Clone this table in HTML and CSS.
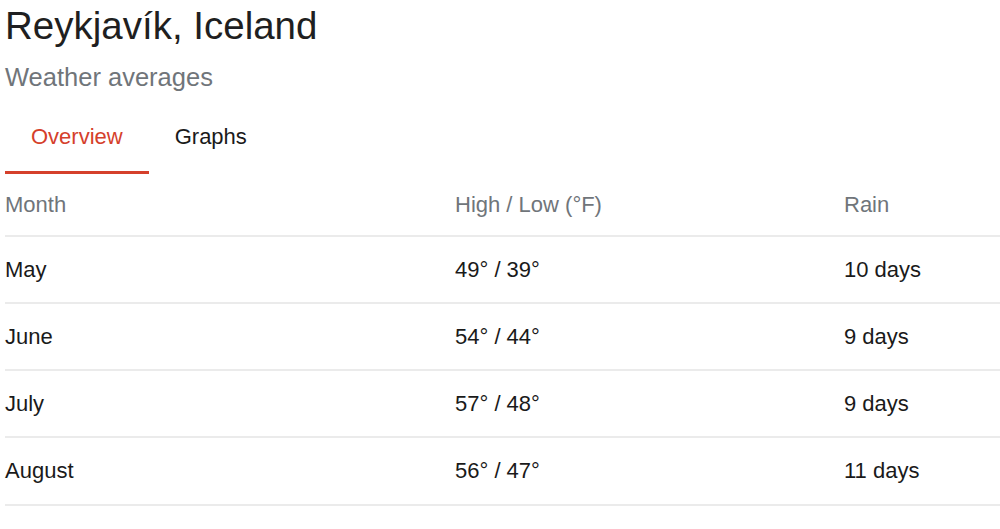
FILE: index.html
```html
<!DOCTYPE html>
<html lang="en">
<head>
<meta charset="utf-8">
<title>Reykjavík, Iceland – Weather averages</title>
<link rel="stylesheet" href="styles.css">
</head>
<body>
<main class="card">
  <h1 class="title">Reykjavík, Iceland</h1>
  <div class="subtitle">Weather averages</div>
  <nav class="tabs">
    <div class="tab active">Overview</div>
    <div class="tab">Graphs</div>
  </nav>
  <div class="table">
    <div class="row head">
      <div>Month</div>
      <div>High / Low (°F)</div>
      <div>Rain</div>
    </div>
    <div class="row">
      <div>May</div>
      <div>49° / 39°</div>
      <div>10 days</div>
    </div>
    <div class="row">
      <div>June</div>
      <div>54° / 44°</div>
      <div>9 days</div>
    </div>
    <div class="row">
      <div>July</div>
      <div>57° / 48°</div>
      <div>9 days</div>
    </div>
    <div class="row last">
      <div>August</div>
      <div>56° / 47°</div>
      <div>11 days</div>
    </div>
  </div>
</main>
</body>
</html>
```
FILE: styles.css
```css
html, body {
  margin: 0;
  padding: 0;
  background: #ffffff;
}

body {
  font-family: "Liberation Sans", Arial, Helvetica, sans-serif;
  color: #202124;
}

.card {
  padding-left: 5px;
}

.title {
  margin: 4px 0 0 0;
  font-size: 38.5px;
  line-height: 44px;
  font-weight: normal;
  color: #1f1f21;
}

.subtitle {
  margin-top: 13px;
  font-size: 25.5px;
  line-height: 32px;
  color: #70757a;
}

.tabs {
  display: flex;
}

.tab {
  padding: 31px 26px 21px 26px;
  font-size: 22px;
  line-height: 26px;
  color: #1a1a1a;
  border-bottom: 3px solid transparent;
}

.tab.active {
  color: #d5402b;
  border-bottom-color: #d5402b;
}

.table {
  display: flex;
  flex-direction: column;
}

.row {
  display: grid;
  grid-template-columns: 450px 389px 1fr;
  font-size: 22px;
  line-height: 26px;
  padding: 20px 0 19px 0;
  border-bottom: 2px solid #ebebeb;
  color: #1a1a1a;
}

.row.head {
  padding: 18px 0 17px 0;
  color: #70757a;
}

.row.last {
  padding-bottom: 20px;
}
```
